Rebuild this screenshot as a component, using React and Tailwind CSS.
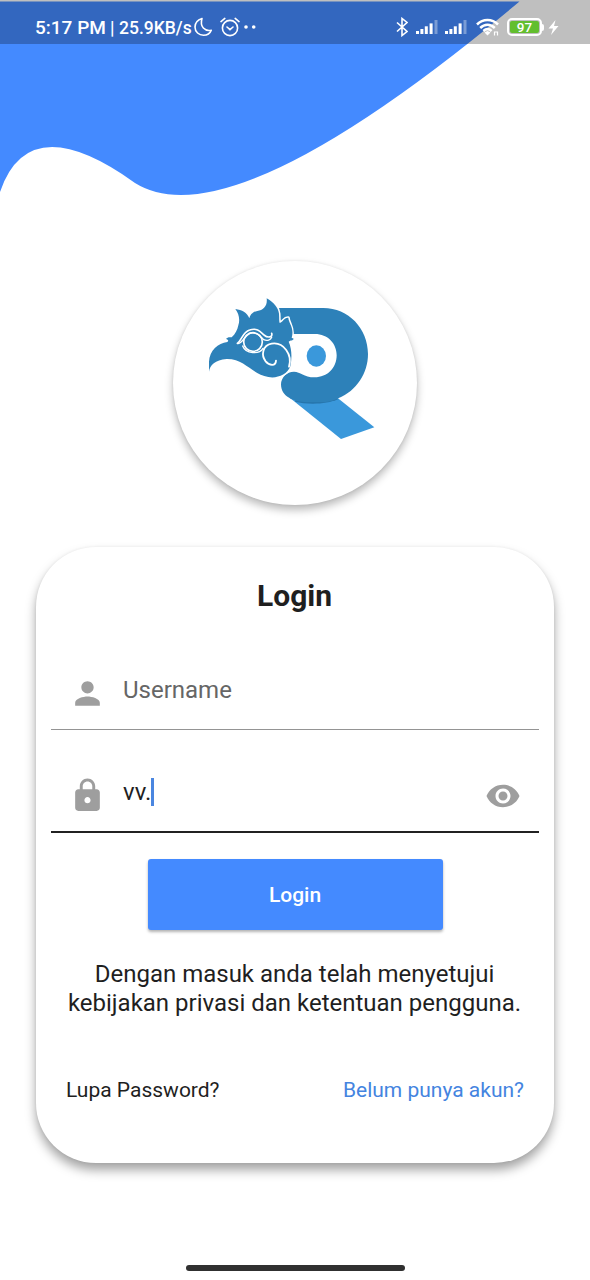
import { MdPerson, MdLock, MdVisibility } from "react-icons/md";

function Signal() {
  return (
    <svg className="h-[14px] w-[22px]" viewBox="0 0 22 14" fill="#fff">
      <rect x="0" y="11" width="3" height="3" />
      <rect x="4.4" y="9" width="3" height="5" />
      <rect x="8.8" y="6.3" width="3" height="7.7" />
      <rect x="13.6" y="3.4" width="3" height="10.6" />
      <rect x="18.5" y="0" width="3" height="14" opacity="0.35" />
    </svg>
  );
}

function StatusBar() {
  return (
    <div className="relative flex h-[44px] items-center bg-black/25 pl-[35px] pt-[10px] text-white">
      <div className="flex w-[361px] items-center whitespace-nowrap font-medium">
        <span className="w-[75px] pt-[2px] text-[19px] leading-5">5:17 PM</span>
        <span className="w-[9px] pt-[1px] text-[18px] leading-5">|</span>
        <span className="w-[75px] pt-[2px] text-[17.5px] leading-5">25.9KB/s</span>
        <svg className="h-[20px] w-[19px]" viewBox="0 0 19 20" fill="none" stroke="#fff" strokeWidth="1.6" strokeLinejoin="round">
          <path d="M8 1.500C3.500 3 1 6 1 10c0 5 4 8.200 8.500 8.200 3.700 0 6.600-2 7.800-5C11 14.500 5.500 10 8 1.500Z" />
        </svg>
        <svg className="ml-[7px] h-[20px] w-[20px]" viewBox="0 0 20 20" fill="none" stroke="#fff" strokeWidth="1.6" strokeLinecap="round">
          <circle cx="10" cy="11" r="7.600" />
          <path d="M1 4.600 4.800 1.400M19 4.600 15.200 1.400M7 10l3 2.600 3-2.600" />
        </svg>
        <svg className="ml-[4px] h-[4px] w-[12px]" viewBox="0 0 12 4" fill="#fff">
          <circle cx="2" cy="2" r="1.800" />
          <circle cx="9.700" cy="2" r="1.800" />
        </svg>
      </div>
      <svg className="h-[20px] w-[12px]" viewBox="0 0 12 20" fill="none" stroke="#fff" strokeWidth="1.600">
        <path d="M1 5.500 11 14.500 6 18.500V1.500L11 5.500 1 14.500" />
      </svg>
      <div className="ml-[8px] flex gap-[7px]">
        <Signal />
        <Signal />
      </div>
      <svg className="ml-[9px] h-[19px] w-[24px]" viewBox="0 0 24 19" fill="none" stroke="#fff" strokeWidth="2.500">
        <path d="M1 6.500C7 .4 16 .4 22 6.500" />
        <path d="M4.200 10C8.500 5.800 14.500 5.800 18.800 10" />
        <path d="M7.400 13C10 10.500 13 10.500 15.600 13" />
        <path d="M8.500 14.500 11.500 17.500 14.500 14.500 11.500 13Z" fill="#fff" stroke="none" />
        <path d="M18.500 17.500v-3.500h3v3.500" strokeWidth="1.200" />
      </svg>
      <div className="ml-[7px] flex items-center">
        <div className="h-[18px] w-[35px] rounded-[5px] border-2 border-white p-[1px]">
          <div className="flex h-full items-center justify-center rounded-[2px] bg-[#62be2e] pt-[1px] text-[13.500px] font-medium leading-none">97</div>
        </div>
        <div className="h-[7px] w-[2px] rounded-r bg-white" />
      </div>
      <svg className="ml-[4px] h-[17px] w-[11px]" viewBox="0 0 11 17" fill="#fff">
        <path d="M7.500 1 .5 9.500H5L3 16 10.500 7H6Z" />
      </svg>
    </div>
  );
}

function Logo() {
  return (
    <svg className="h-[244px] w-[244px]" viewBox="39 33 732 732">
      <path d="M390 444 543 567 643 532 533 444Z" fill="#3a98db" />
      <path d="M405 455C440 464 500 464 535 447L520 440H410Z" fill="#2674ab" />
      <path
        d="M356 174H490C565 174 624 235 624 312C624 370 590 422 535 445C515 455 500 457 485 457H440C400 455 363 440 363 403C363 383 380 365 402 365C422 365 430 382 464 382C502 382 530 354 530 316C530 280 503 252 465 252H385L350 215Z"
        fill="#2d81b9"
      />
      <ellipse cx="469" cy="318" rx="29" ry="32" fill="#3a98db" />
      <path
        d="M147 365V335C149 302 174 279 202 276C207 271 204 269 198 267C202 261 208 261 215 262C226 252 232 240 235 226C241 208 236 190 226 177C246 180 261 187 268 205C272 190 282 185 292 183C310 180 323 168 320 145C341 157 355 174 357 191C358 205 357 214 359 219C370 216 371 202 385 203C385 218 404 234 395 263L401 266C399 272 392 270 386 275C396 297 396 325 391 349C382 375 350 386 325 381C275 373 255 326 200 327C165 330 150 345 147 365Z"
        fill="#2d81b9"
        stroke="#fff"
        strokeWidth="9"
        strokeLinejoin="round"
        paintOrder="stroke"
      />
      <g fill="none" stroke="#fff" strokeWidth="5" strokeLinecap="round">
        <circle cx="279" cy="276" r="28" />
        <path d="M232 280C246 270 247 247 269 240C292 232 302 246 312 255C324 265 339 262 335 250" />
        <path d="M234 281C250 277 255 255 272 249C292 244 303 262 311 269C322 274 332 270 335 262" strokeWidth="4" />
        <path d="M248 288C257 312 298 314 309 295" strokeWidth="4" />
        <path d="M348 332C347 350 328 347 317 334C303 316 307 286 335 281C371 275 398 315 387 350" strokeWidth="5.500" />
      </g>
    </svg>
  );
}

export default function App() {
  return (
    <div className="relative flex h-[1280px] w-[590px] flex-col overflow-hidden bg-white font-['Roboto',sans-serif] text-[#1f1f1f]">
      <svg className="absolute left-0 top-0 h-[210px] w-[590px]" viewBox="0 0 590 210">
        <path d="M0 1.500H519.500Q231 243 135 183Q29 107 0 192Z" fill="#448aff" />
      </svg>
      <StatusBar />
      <div className="mt-[217px] h-[244px] w-[244px] self-center rounded-full bg-white shadow-[0_5px_9px_rgba(0,0,0,0.27),0_0_3px_rgba(0,0,0,0.08)]">
        <Logo />
      </div>
      <main className="mx-[36px] mt-[42px] flex h-[616px] flex-col rounded-[60px] bg-white px-[15px] pt-[31px] shadow-[0_7px_11px_rgba(0,0,0,0.36),0_0_3px_rgba(0,0,0,0.06)]">
        <h1 className="-ml-[1px] text-center text-[30px] font-bold leading-[36px]">Login</h1>
        <div className="mt-[43px] flex h-[73px] items-center border-b-[1.500px] border-[#949494] pl-[18px]">
          <MdPerson className="size-[37px] text-[#9e9e9e]" />
          <span className="-mt-[6px] ml-[17px] text-[24px] leading-7 text-[#666]">Username</span>
        </div>
        <div className="mt-[30px] flex h-[73px] items-center border-b-2 border-[#212121] pl-[18px] pr-[18px]">
          <MdLock className="size-[37px] text-[#9e9e9e]" />
          <span className="-mt-[8px] ml-[17px] text-[24px] leading-7">vv.</span>
          <span className="-mt-[8px] h-[28px] w-[3px] bg-[#4a86e0]" />
          <MdVisibility className="ml-auto mt-[1px] size-[36px] text-[#9e9e9e]" />
        </div>
        <button className="mt-[26px] h-[71px] w-[295px] self-center rounded-[3px] bg-[#448aff] pt-[2px] text-[21px] font-medium text-white shadow-[0_2px_3px_rgba(0,0,0,0.3)]">
          Login
        </button>
        <p className="-ml-[1px] mt-[30px] whitespace-nowrap text-center text-[24px] leading-[29px]">
          Dengan masuk anda telah menyetujui
          <br />
          kebijakan privasi dan ketentuan pengguna.
        </p>
        <div className="mt-[58px] flex justify-between px-[15px] text-[21px] leading-7">
          <span>Lupa Password?</span>
          <span className="text-[#4484e0]">Belum punya akun?</span>
        </div>
      </main>
      <div className="mt-[102px] h-[6px] w-[219px] self-center rounded-full bg-[#303030]" />
    </div>
  );
}
